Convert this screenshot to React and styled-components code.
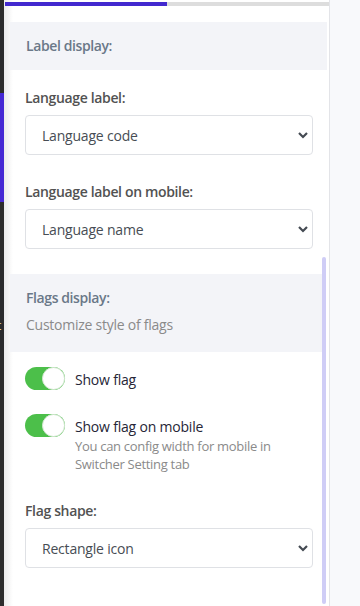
import React from 'react'
import styled, { createGlobalStyle } from 'styled-components'

const GlobalStyle = createGlobalStyle`
    html, body {
        margin: 0;
        padding: 0;
        background: #f8f9fb;
        font-family: 'Open Sans', 'Liberation Sans', sans-serif;
    }
`

const Page = styled.div`
    display: flex;
    height: 606px;
    overflow: hidden;
    background: #f8f9fb;
`

const SideStrip = styled.div`
    width: 4px;
    flex-shrink: 0;
    background: #2d2d2d;
    padding-top: 93px;
    overflow: hidden;
`

const SideActive = styled.div`
    height: 109px;
    background: #4529d4;
`

const SideLetter = styled.span`
    display: block;
    margin: 117px 0 0 -3px;
    font-size: 12px;
    line-height: 14px;
    color: #f3e6b0;
`

const Panel = styled.div`
    position: relative;
    width: 326px;
    flex-shrink: 0;
    background: linear-gradient(to right, #ececec, #ffffff 9px);
    border-right: 1px solid #e3e4e8;
    padding: 2px 2px 0 6px;
    box-sizing: border-box;
`

const Progress = styled.div`
    display: flex;
    height: 4px;
    margin: 0 -2px 0 -5px;
    background: #dddddd;
`

const ProgressFill = styled.div`
    background: #4229cf;
`

const SectionHead = styled.div`
    margin-top: ${p => p.$top}px;
    background: #f3f4f8;
    padding: 14px 16px ${p => p.$bottom}px;
    margin-right: ${p => p.$right}px;
`

const SectionTitle = styled.div`
    font-size: 14px;
    line-height: 20px;
    font-weight: 600;
    letter-spacing: -0.4px;
    color: #6a7888;
`

const SectionSub = styled.div`
    margin-top: 7px;
    font-size: 14px;
    line-height: 20px;
    letter-spacing: -0.25px;
    color: #8a8a8a;
`

const Field = styled.div`
    margin: ${p => p.$top}px 14px 0 15px;
`

const FieldLabel = styled.div`
    font-size: 14px;
    line-height: 20px;
    font-weight: 600;
    letter-spacing: -0.35px;
    color: #525252;
    margin-bottom: 7px;
`

const SelectWrap = styled.div`
    position: relative;
    height: 40px;
`

const Select = styled.select`
    appearance: none;
    width: 100%;
    height: 40px;
    border: 1px solid #dfe1e5;
    border-radius: 4px;
    background: #ffffff;
    padding: 0 30px 0 16px;
    font-family: inherit;
    font-size: 14px;
    letter-spacing: -0.2px;
    color: #474d54;
    outline: none;
`

const Chevron = styled.svg`
    position: absolute;
    right: 4px;
    top: 16px;
    pointer-events: none;
`

const ToggleRow = styled.div`
    display: flex;
    align-items: flex-start;
    gap: 10px;
    margin: ${p => p.$top}px 14px 0 15px;
`

const Switch = styled.div`
    position: relative;
    width: 40px;
    height: 23px;
    flex-shrink: 0;
    border-radius: 12px;
    background: #4cbf4a;
`

const Knob = styled.div`
    position: absolute;
    right: 0;
    top: 0;
    width: 21px;
    height: 21px;
    border-radius: 50%;
    background: #ffffff;
    border: 1px solid #d6e8d4;
`

const ToggleText = styled.div`
    padding-top: 3px;
`

const ToggleLabel = styled.div`
    font-size: 14px;
    line-height: 20px;
    letter-spacing: -0.2px;
    color: #262636;
`

const ToggleHelp = styled.div`
    font-size: 13px;
    line-height: 18px;
    letter-spacing: -0.3px;
    color: #8a8a8a;
    &:first-of-type {
        margin-top: 2px;
    }
`

const ScrollThumb = styled.div`
    position: absolute;
    right: 3px;
    top: 257px;
    width: 4px;
    height: 347px;
    border-radius: 2px;
    background: #cfcdf6;
`

const SelectField = ({ label, value, top }) => (
    <Field $top={top}>
        <FieldLabel>{label}</FieldLabel>
        <SelectWrap>
            <Select defaultValue={value}>
                <option>{value}</option>
            </Select>
            <Chevron width="12" height="8" viewBox="0 0 12 8">
                <path d="M2 2 L6 6 L10 2" fill="none" stroke="#444a52" strokeWidth="2.2" />
            </Chevron>
        </SelectWrap>
    </Field>
)

const Toggle = ({ label, help, top }) => (
    <ToggleRow $top={top}>
        <Switch>
            <Knob />
        </Switch>
        <ToggleText>
            <ToggleLabel>{label}</ToggleLabel>
            {help && help.map(line => <ToggleHelp key={line}>{line}</ToggleHelp>)}
        </ToggleText>
    </ToggleRow>
)

export default function App() {
    return (
        <Page>
            <GlobalStyle />
            <SideStrip>
                <SideActive />
                <SideLetter>t</SideLetter>
            </SideStrip>
            <Panel>
                <Progress>
                    <ProgressFill style={{ width: '50%' }} />
                </Progress>
                <SectionHead $top={16} $bottom={14} $right={0}>
                    <SectionTitle>Label display:</SectionTitle>
                </SectionHead>
                <SelectField top={18} label="Language label:" value="Language code" />
                <SelectField top={27} label="Language label on mobile:" value="Language name" />
                <SectionHead $top={25} $bottom={17} $right={4}>
                    <SectionTitle>Flags display:</SectionTitle>
                    <SectionSub>Customize style of flags</SectionSub>
                </SectionHead>
                <Toggle top={15} label="Show flag" />
                <Toggle
                    top={24}
                    label="Show flag on mobile"
                    help={['You can config width for mobile in', 'Switcher Setting tab']}
                />
                <SelectField top={28} label="Flag shape:" value="Rectangle icon" />
                <ScrollThumb />
            </Panel>
        </Page>
    )
}
